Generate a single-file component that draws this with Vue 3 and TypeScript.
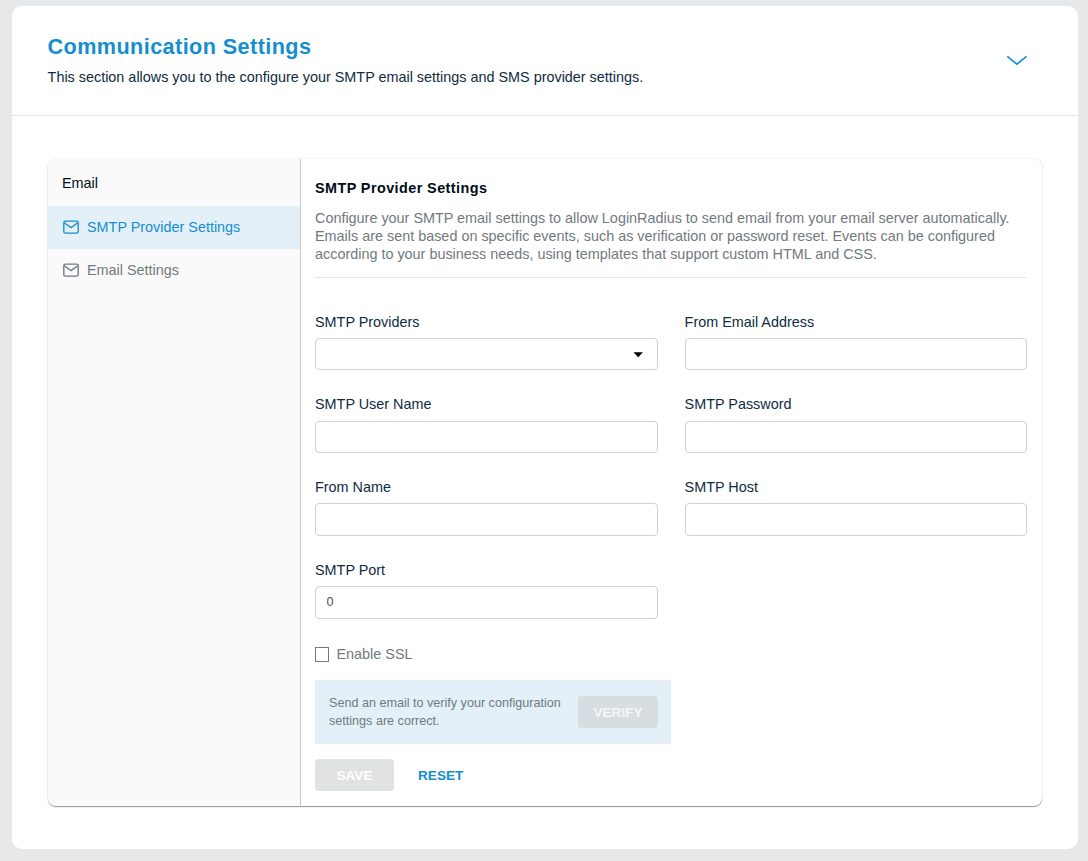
<script setup lang="ts">
import { ref } from 'vue'

interface Field {
  id: string
  label: string
  value: string
  kind: 'text' | 'select'
}

const fields = ref<Field[]>([
  { id: 'provider', label: 'SMTP Providers', value: '', kind: 'select' },
  { id: 'from-email', label: 'From Email Address', value: '', kind: 'text' },
  { id: 'user', label: 'SMTP User Name', value: '', kind: 'text' },
  { id: 'password', label: 'SMTP Password', value: '', kind: 'text' },
  { id: 'from-name', label: 'From Name', value: '', kind: 'text' },
  { id: 'host', label: 'SMTP Host', value: '', kind: 'text' },
  { id: 'port', label: 'SMTP Port', value: '0', kind: 'text' },
])

const menu = ['SMTP Provider Settings', 'Email Settings']
const active = ref(menu[0])
const ssl = ref(false)
</script>

<template>
  <main class="page">
    <section class="card">
      <header class="head">
        <div>
          <h1 class="title">Communication Settings</h1>
          <p class="subtitle">This section allows you to the configure your SMTP email settings and SMS provider settings.</p>
        </div>
        <svg class="chevron" width="22" height="12" viewBox="0 0 22 12" fill="none" stroke="currentColor" stroke-width="1.6">
          <path d="M1.3 1.3 L10.9 9.2 L20.5 1.3" />
        </svg>
      </header>

      <div class="panel">
        <nav class="side">
          <div class="group">Email</div>
          <a v-for="item in menu" :key="item" class="item" :class="{ active: item === active }" @click="active = item">
            <svg class="mail" width="16" height="14" viewBox="0 0 16 14" fill="none" stroke="currentColor" stroke-width="1.35">
              <rect x="0.8" y="1.1" width="14.4" height="12" rx="1.6" />
              <path d="M1.2 2.8 L8 7.6 L14.8 2.8" />
            </svg>
            <span>{{ item }}</span>
          </a>
        </nav>

        <div class="content">
          <h2 class="heading">SMTP Provider Settings</h2>
          <p class="desc">
            Configure your SMTP email settings to allow LoginRadius to send email from your email server automatically.<br />
            Emails are sent based on specific events, such as verification or password reset. Events can be configured<br />
            according to your business needs, using templates that support custom HTML and CSS.
          </p>

          <div class="grid">
            <div v-for="f in fields" :key="f.id" class="field">
              <label class="label" :for="f.id">{{ f.label }}</label>
              <div v-if="f.kind === 'select'" :id="f.id" class="control select">
                <svg width="10" height="7" viewBox="0 0 10 7"><path d="M0.5 1.2 H9.9 L5.2 6.3 Z" fill="#000" /></svg>
              </div>
              <input v-else :id="f.id" v-model="f.value" class="control" type="text" />
            </div>
          </div>

          <label class="check">
            <input v-model="ssl" class="box" type="checkbox" />
            <span>Enable SSL</span>
          </label>

          <div class="verify">
            <p class="note">Send an email to verify your configuration settings are correct.</p>
            <button class="btn btn-verify" disabled>VERIFY</button>
          </div>

          <div class="actions">
            <button class="btn btn-save" disabled>SAVE</button>
            <button class="btn btn-reset">RESET</button>
          </div>
        </div>
      </div>
    </section>
  </main>
</template>

<style>
body {
  background: #e7e8ea;
}
</style>

<style scoped>
.page,
.page * {
  box-sizing: border-box;
}
.page {
  height: 861px;
  padding: 6px 10px 12px 12px;
  background: #e7e8ea;
  font-family: 'Liberation Sans', Arial, sans-serif;
  font-size: 14.4px;
  line-height: 18px;
  color: #0f2b41;
}
.card {
  height: 843px;
  border-radius: 10px;
  background: #fff;
}
.head {
  display: flex;
  justify-content: space-between;
  height: 110px;
  padding: 27px 50px 0 35.6px;
  border-bottom: 1px solid #e4e5e6;
}
.title {
  margin: 0;
  font-size: 21.6px;
  line-height: 28px;
  letter-spacing: 0.43px;
  color: #148ecf;
}
.subtitle {
  margin: 7px 0 0;
}
.chevron {
  margin-top: 22px;
  color: #148ecf;
}
.panel {
  display: flex;
  width: 994px;
  height: 647px;
  margin: 43px 0 0 36px;
  border-radius: 8px;
  overflow: hidden;
  background: #fff;
  box-shadow: 0 1px 1px rgba(0, 0, 0, 0.4), 0 0 2px rgba(0, 0, 0, 0.12);
}
.side {
  width: 253px;
  border-right: 1px solid #c7c8ca;
  background: #fafafa;
}
.group {
  height: 47px;
  padding: 15px 14px 0;
  color: #000d16;
}
.item {
  display: flex;
  align-items: center;
  gap: 8px;
  height: 43px;
  padding: 0 0 1px 15px;
  color: #72797e;
}
.item.active {
  background: #e3f0f8;
  color: #148ecf;
}
.content {
  width: 741px;
  padding: 20px 15px 0 14px;
}
.heading {
  margin: 0;
  font-size: 14.4px;
  line-height: 18px;
  letter-spacing: 0.43px;
  color: #000d16;
}
.desc {
  height: 81px;
  margin: 0;
  padding-top: 12px;
  border-bottom: 1px solid #e4e5e6;
  white-space: nowrap;
  color: #72797e;
}
.grid {
  display: grid;
  grid-template-columns: 342.6px 342.4px;
  column-gap: 27px;
  grid-auto-rows: 82.75px;
  padding-top: 34.65px;
}
.label {
  display: block;
  height: 25.2px;
}
.control {
  display: block;
  width: 100%;
  height: 32.5px;
  padding: 0 10.5px;
  border: 1px solid #cbd0da;
  border-radius: 4px;
  background: #fff;
  font-family: inherit;
  font-size: 12.6px;
  color: #4a5157;
  outline: none;
}
.select {
  display: flex;
  align-items: center;
  justify-content: flex-end;
  padding-right: 13.4px;
}
.check {
  display: flex;
  align-items: center;
  gap: 7.5px;
  height: 18px;
  margin-top: 1px;
  color: #72797e;
}
.box {
  appearance: none;
  width: 14px;
  height: 15px;
  margin: 1px 0 0;
  border: 1px solid #72797e;
  background: #fff;
}
.verify {
  display: flex;
  align-items: center;
  justify-content: space-between;
  width: 356px;
  height: 64px;
  margin-top: 17.35px;
  padding: 0 13px 0 14px;
  background: #e3f0f8;
}
.note {
  width: 240px;
  margin: 0;
  font-size: 12.6px;
  color: #72797e;
}
.btn {
  height: 32px;
  padding: 2px 0 0;
  border: 0;
  border-radius: 4px;
  font-family: inherit;
  font-size: 13.6px;
  font-weight: 700;
}
.btn-verify {
  width: 80px;
  background: #d7dde1;
  color: #f3f7fa;
}
.actions {
  display: flex;
  gap: 24px;
  margin-top: 15px;
}
.btn-save {
  width: 79px;
  background: #e1e3e2;
  color: #fff;
}
.btn-reset {
  background: none;
  color: #148ecf;
}
</style>
